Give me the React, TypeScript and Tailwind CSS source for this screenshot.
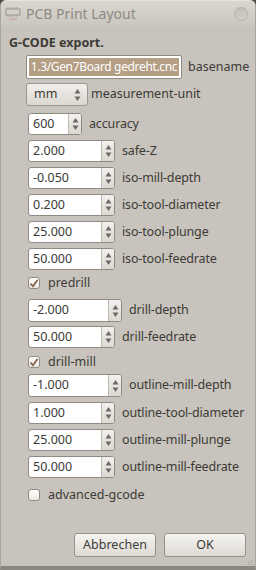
import React from "react";

const font = { fontFamily: '"Noto Sans", "DejaVu Sans", sans-serif' };

function Arrows() {
  return (
    <svg width="7" height="16" viewBox="0 0 7 16" className="block">
      <path d="M3.5 2 L6.5 6.5 L0.5 6.5 Z" fill="#6e6a64" />
      <path d="M3.5 14 L6.5 9.5 L0.5 9.5 Z" fill="#6e6a64" />
    </svg>
  );
}

function Spin({ value, entryW, label, tall }: { value: string; entryW: string; label: string; tall?: boolean }) {
  return (
    <div className={`flex items-center ${tall ? "h-[23px]" : "h-[22px]"}`}>
      <div className={`flex ${tall ? "h-[23px]" : "h-[22px]"} rounded-[3px] border border-[#8f8a82] bg-white overflow-hidden`}>
        <div className={`${entryW} flex items-center pl-[4px] text-[12.5px] text-[#3c3b37]`}>{value}</div>
        <div className="w-[13px] flex items-center justify-center border-l border-[#bdb8b0] bg-gradient-to-b from-[#f2f1ef] to-[#dcd8d2]">
          <Arrows />
        </div>
      </div>
      <span className="ml-[7px] text-[12.5px] tracking-[-0.15px] text-[#3c3b37]">{label}</span>
    </div>
  );
}

function Check({ checked, label }: { checked: boolean; label: string }) {
  return (
    <div className="flex items-center h-[16px]">
      <div className="w-[12px] h-[12px] rounded-[3px] border border-[#8f8a82] bg-gradient-to-b from-[#ffffff] to-[#ece9e5] flex items-center justify-center">
        {checked && (
          <svg width="11" height="11" viewBox="0 0 11 11">
            <path d="M1.5 5.5 L4.3 8.5 L9.5 1.5" stroke="#8a6a50" strokeWidth="2" fill="none" />
          </svg>
        )}
      </div>
      <span className="ml-[8px] text-[12.5px] text-[#3c3b37]">{label}</span>
    </div>
  );
}

export default function App() {
  return (
    <div style={font} className="w-[256px] h-[570px] bg-[#4a4a46] overflow-hidden">
      <div className="w-[256px] h-[570px] rounded-t-[6px] bg-[#c8c4bd] flex flex-col border-x border-[#a9a59e] border-b-[4px] border-b-[#8b877f]">
        {/* title bar */}
        <div className="h-[26px] flex items-center rounded-t-[6px] bg-gradient-to-b from-[#d9d6d0] to-[#cbc7c0] border-t border-[#e6e3de] shrink-0">
          <svg width="16" height="14" viewBox="0 0 16 14" className="ml-[4px] mt-[1px]">
            <rect x="1" y="2" width="14" height="6" fill="none" stroke="#9a968e" strokeWidth="1" />
            <path d="M3 2 V0 M6 2 V0 M9 2 V0 M12 2 V0 M3 8 V10 M6 8 V10 M9 8 V10 M12 8 V10" stroke="#a09c94" strokeWidth="1" />
            <path d="M4 12 H12" stroke="#c59a8a" strokeWidth="1" />
          </svg>
          <span className="ml-[5px] text-[14px] text-[#8d8983]">PCB Print Layout</span>
          <div className="ml-auto mr-[7px] w-[14px] h-[14px] rounded-full border border-[#b6b2ab] bg-gradient-to-b from-[#c4c0b9] to-[#d2cec8]" />
        </div>
        {/* body */}
        <div className="flex flex-col pl-[8px] pt-[8px]">
          <div className="text-[12.5px] font-bold text-[#3c3b37] h-[17px] leading-[17px]">G-CODE export.</div>
          <div className="flex items-center mt-[4px] ml-[17px] h-[24px]">
            <div className="w-[156px] h-[24px] border border-[#8f8a82] bg-white p-[2px] rounded-[2px]">
              <div className="h-full bg-[#b49e84] text-white text-[12px] tracking-[-0.35px] leading-[18px] overflow-hidden whitespace-nowrap flex justify-center">
                <span>1.3/Gen7Board gedreht.cnc</span>
              </div>
            </div>
            <span className="ml-[6px] text-[12.5px] text-[#3c3b37]">basename</span>
          </div>
          <div className="flex items-center mt-[4px] ml-[17px] h-[23px]">
            <div className="w-[62px] h-[23px] rounded-[3px] border border-[#9c978f] bg-gradient-to-b from-[#f1efec] to-[#dcd8d1] flex items-center pl-[7px] pr-[6px]">
              <span className="text-[12.5px] text-[#3c3b37]">mm</span>
              <span className="ml-auto"><Arrows /></span>
            </div>
            <span className="ml-[3px] text-[12.5px] text-[#3c3b37]">measurement-unit</span>
          </div>
          <div className="flex flex-col ml-[19px] mt-[7px] gap-[5px]">
            <Spin value="600" entryW="w-[39px]" label="accuracy" />
            <Spin value="2.000" entryW="w-[72px]" label="safe-Z" />
            <Spin value="-0.050" entryW="w-[72px]" label="iso-mill-depth" />
            <Spin value="0.200" entryW="w-[72px]" label="iso-tool-diameter" />
            <Spin value="25.000" entryW="w-[72px]" label="iso-tool-plunge" />
            <Spin value="50.000" entryW="w-[72px]" label="iso-tool-feedrate" />
          </div>
          <div className="ml-[19px] mt-[5px]">
            <Check checked label="predrill" />
          </div>
          <div className="flex flex-col ml-[19px] mt-[8px] gap-[4px]">
            <Spin value="-2.000" entryW="w-[79px]" label="drill-depth" tall />
            <Spin value="50.000" entryW="w-[72px]" label="drill-feedrate" />
          </div>
          <div className="ml-[19px] mt-[6px]">
            <Check checked label="drill-mill" />
          </div>
          <div className="flex flex-col ml-[19px] mt-[4px] gap-[5px]">
            <Spin value="-1.000" entryW="w-[79px]" label="outline-mill-depth" tall />
            <Spin value="1.000" entryW="w-[72px]" label="outline-tool-diameter" />
            <Spin value="25.000" entryW="w-[72px]" label="outline-mill-plunge" />
            <Spin value="50.000" entryW="w-[72px]" label="outline-mill-feedrate" />
          </div>
          <div className="ml-[19px] mt-[9px]">
            <Check checked={false} label="advanced-gcode" />
          </div>
        </div>
        <div className="mt-auto flex justify-end gap-[8px] pr-[9px] pb-[9px] relative">
          <button className="w-[82px] h-[24px] rounded-[3px] border border-[#948f87] bg-gradient-to-b from-[#f5f4f2] to-[#dedad4] text-[12.5px] text-[#3c3b37]">Abbrechen</button>
          <button className="w-[82px] h-[24px] rounded-[3px] border border-[#948f87] bg-gradient-to-b from-[#f5f4f2] to-[#dedad4] text-[12.5px] text-[#3c3b37]">OK</button>
          <svg width="8" height="8" viewBox="0 0 8 8" className="absolute right-[1px] bottom-[0px]">
            <g fill="#aaa59d">
              <rect x="6" y="0" width="1" height="1" />
              <rect x="4" y="2" width="1" height="1" />
              <rect x="6" y="2" width="1" height="1" />
              <rect x="2" y="4" width="1" height="1" />
              <rect x="4" y="4" width="1" height="1" />
              <rect x="6" y="4" width="1" height="1" />
              <rect x="0" y="6" width="1" height="1" />
              <rect x="2" y="6" width="1" height="1" />
              <rect x="4" y="6" width="1" height="1" />
              <rect x="6" y="6" width="1" height="1" />
            </g>
          </svg>
        </div>
      </div>
    </div>
  );
}
